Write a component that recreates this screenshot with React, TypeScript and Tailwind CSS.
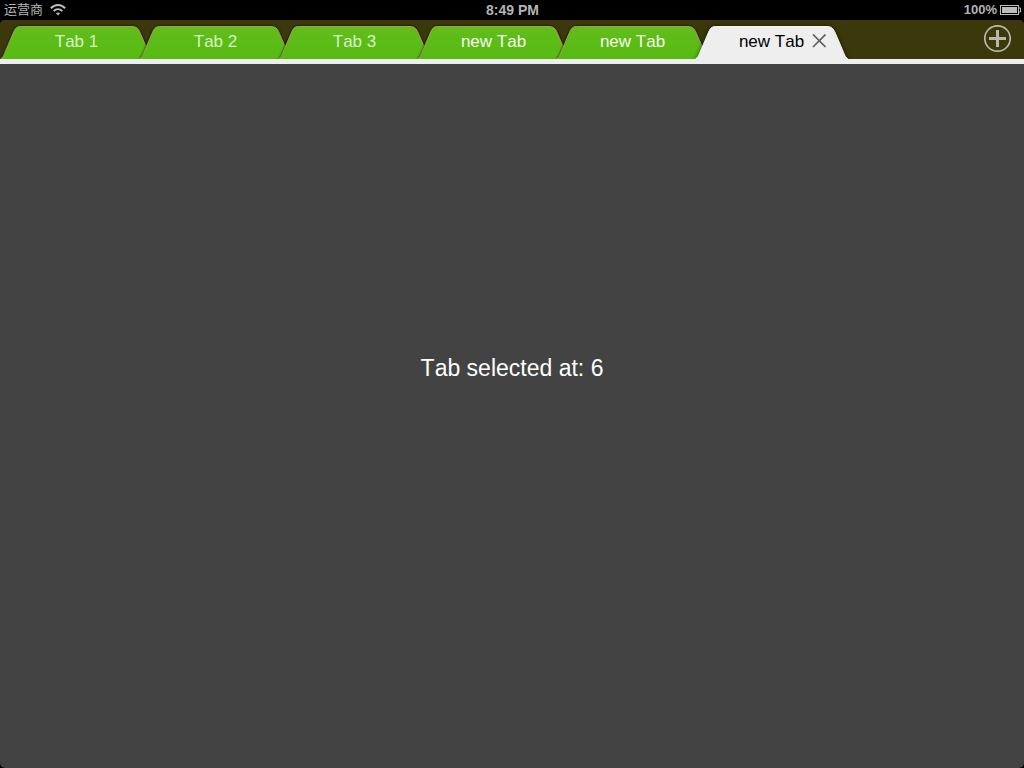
import { useState } from "react";

type Tab = { id: number; title: string; closable: boolean };

const initialTabs: Tab[] = [
  { id: 1, title: "Tab 1", closable: false },
  { id: 2, title: "Tab 2", closable: false },
  { id: 3, title: "Tab 3", closable: false },
  { id: 4, title: "new Tab", closable: true },
  { id: 5, title: "new Tab", closable: true },
  { id: 6, title: "new Tab", closable: true },
];

const EDGE =
  "M0.500 33 C2.500 32 3.500 30 4.500 27.500 L13 7.500 C15 2.500 16.500 0.500 20.500 0.500 L132 0.500 C136.500 0.500 138.500 2.500 140.500 7.500 L149 27.500 C150 30 151 32 153 33";

function WifiIcon() {
  return (
    <svg className="h-3 w-4" viewBox="0 0 16 12" fill="none" stroke="#bdbdbd" strokeWidth="2" aria-hidden="true">
      <path d="M0.900 4.300 C5 0 11 0 15.100 4.300" />
      <path d="M3.700 7.100 C6.200 4.700 9.800 4.700 12.300 7.100" />
      <path d="M8 11.500 L5.900 9.300 C7.100 8.200 8.900 8.200 10.100 9.300 Z" fill="#bdbdbd" stroke="none" />
    </svg>
  );
}

function BatteryIcon() {
  return (
    <svg className="h-[10px] w-[21px]" viewBox="0 0 21 10" aria-hidden="true">
      <rect x="0.5" y="0.5" width="18" height="9" fill="none" stroke="#bdbdbd" />
      <rect x="2" y="2" width="15" height="6" fill="#bdbdbd" />
      <path d="M19 3 H20.500 V7 H19" fill="none" stroke="#bdbdbd" />
    </svg>
  );
}

function StatusBar() {
  return (
    <header className="grid h-5 grid-cols-3 items-center bg-black pr-[3px] pl-1 text-[13px] leading-5 font-bold text-[#b4b4b4]">
      <div className="flex items-center gap-[7px] font-normal">
        <span>运营商</span>
        <WifiIcon />
      </div>
      <span className="text-center text-[14px] leading-[18px]">8:49 PM</span>
      <div className="flex items-center justify-end gap-[3px]">
        <span>100%</span>
        <BatteryIcon />
      </div>
    </header>
  );
}

function TabShape({ active }: { active: boolean }) {
  return (
    <svg
      className={
        active
          ? "pointer-events-none absolute inset-0 h-full w-full overflow-visible drop-shadow-[0_0_2px_rgba(0,0,0,0.6)]"
          : "pointer-events-none absolute inset-0 h-full w-full overflow-visible drop-shadow-[0_0_1px_rgba(0,0,0,0.9)]"
      }
      viewBox="0 0 153 33"
      preserveAspectRatio="none"
      aria-hidden="true"
    >
      <path d={EDGE + " Z"} fill={active ? "#eeeeee" : "url(#tab-green)"} />
      <path d={EDGE} fill="none" stroke={active ? "#f4f4f0" : "#a5a052"} strokeWidth="1" />
    </svg>
  );
}

export default function App() {
  const [tabs, setTabs] = useState<Tab[]>(initialTabs);
  const [selected, setSelected] = useState(6);

  const addTab = () => {
    const id = Math.max(0, ...tabs.map((t) => t.id)) + 1;
    setTabs([...tabs, { id, title: "new Tab", closable: true }]);
    setSelected(id);
  };

  const closeTab = (id: number) => {
    const rest = tabs.filter((t) => t.id !== id);
    setTabs(rest);
    setSelected(rest[rest.length - 1].id);
  };

  return (
    <div className="flex min-h-screen flex-col bg-black font-['Liberation_Sans','Noto_Sans_CJK_SC',sans-serif] [font-kerning:none]">
      <StatusBar />
      <div className="flex flex-1 flex-col overflow-hidden rounded-[5px] bg-[#434343]">
        <nav className="flex h-11 items-end justify-between overflow-hidden border-b-[5px] border-[#eeeeee] bg-[#3b380b] pr-3 pl-[14px]">
          <svg className="absolute h-0 w-0" aria-hidden="true">
            <defs>
              <linearGradient id="tab-green" x1="0" y1="0" x2="0" y2="1">
                <stop offset="0" stopColor="#62bd1b" />
                <stop offset="1" stopColor="#57ba12" />
              </linearGradient>
            </defs>
          </svg>
          <div role="tablist" className="flex">
            {tabs.map((tab) => {
              const active = tab.id === selected;
              return (
                <div key={tab.id} className={active ? "relative z-10 -ml-[14px] h-[33px] w-[153px]" : "relative -ml-[14px] h-[33px] w-[153px]"}>
                  <TabShape active={active} />
                  <button
                    type="button"
                    role="tab"
                    aria-selected={active}
                    onClick={() => setSelected(tab.id)}
                    className={
                      active
                        ? "relative h-full w-full pb-[2px] text-[17px] leading-5 text-black"
                        : tab.closable
                          ? "relative h-full w-full pb-[2px] text-[17px] leading-5 text-[#f4fbef]"
                          : "relative h-full w-full pb-[2px] text-[17px] leading-5 text-[#d8f2c6]"
                    }
                  >
                    {tab.title}
                  </button>
                  {active && tab.closable && (
                    <button
                      type="button"
                      aria-label="Close tab"
                      onClick={() => closeTab(tab.id)}
                      className="absolute top-2 right-[22px]"
                    >
                      <svg className="h-[14px] w-[14px]" viewBox="0 0 14 14" stroke="#606060" strokeWidth="1.700" aria-hidden="true">
                        <path d="M1 0.500 L13.500 13 M13.500 0.500 L1 13" />
                      </svg>
                    </button>
                  )}
                </div>
              );
            })}
          </div>
          <button type="button" aria-label="Add tab" onClick={addTab} className="mb-[6px]">
            <svg className="h-7 w-7" viewBox="0 0 28 28" fill="none" stroke="#b9b8a8" aria-hidden="true">
              <circle cx="13.500" cy="13.500" r="12.700" strokeWidth="1.700" />
              <path d="M13.500 5 V22 M5 13.500 H22" strokeWidth="3" />
            </svg>
          </button>
        </nav>
        <main className="flex flex-1 justify-center pt-[290px] text-white">
          <p className="text-[23px] leading-7">Tab selected at: {selected}</p>
        </main>
      </div>
    </div>
  );
}
